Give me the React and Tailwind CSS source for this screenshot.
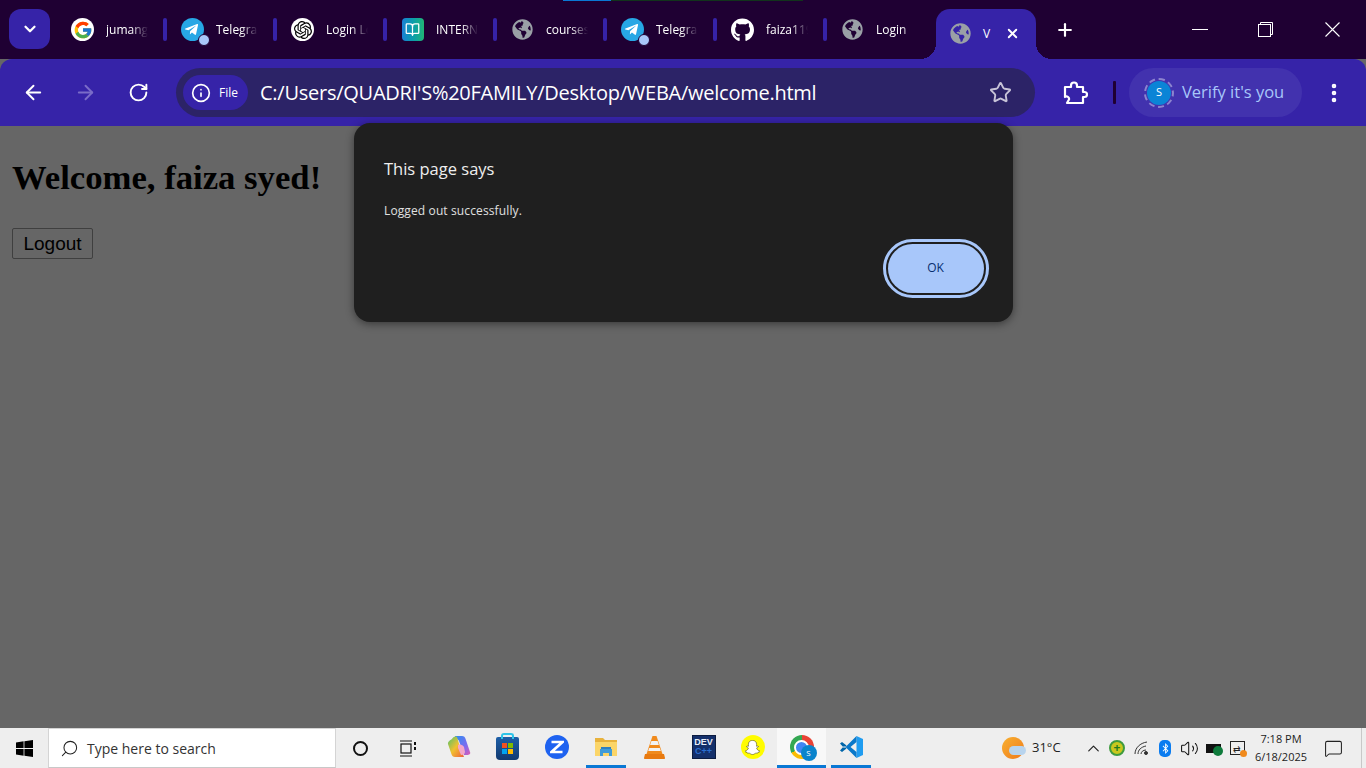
import React from 'react';
import { ArrowLeft, ArrowRight, RotateCw, Info, Star, EllipsisVertical, ChevronDown, Plus, X, ChevronUp, Search, Volume2, MessageSquare } from 'lucide-react';
import { FcGoogle } from 'react-icons/fc';
import { FaTelegramPlane, FaGithub, FaGlobeAmericas, FaSnapchatGhost, FaBluetoothB } from 'react-icons/fa';
import { SiOpenai } from 'react-icons/si';
import { LuBookOpen } from 'react-icons/lu';

const tabs = [
  { label: 'jumangi', icon: 'google' },
  { label: 'Telegram', icon: 'telegram' },
  { label: 'Login Lo', icon: 'openai' },
  { label: 'INTERNS', icon: 'book' },
  { label: 'courses/', icon: 'globe' },
  { label: 'Telegram', icon: 'telegram' },
  { label: 'faiza119', icon: 'github' },
  { label: 'Login', icon: 'globe' },
];

const TabIcon = ({ type }) => {
  switch (type) {
    case 'google':
      return (
        <span className="w-[23px] h-[23px] rounded-full bg-white flex items-center justify-center">
          <FcGoogle size={20} />
        </span>
      );
    case 'telegram':
      return (
        <span className="relative w-[23px] h-[23px] rounded-full bg-[#27a7e5] flex items-center justify-center">
          <FaTelegramPlane size={15} className="text-white -ml-[2px]" />
          <span className="absolute -right-[6px] -bottom-[5px] w-[10px] h-[10px] rounded-full bg-[#a8c7fa] border border-[#1f0033] box-content" />
        </span>
      );
    case 'openai':
      return (
        <span className="w-[23px] h-[23px] rounded-full bg-white flex items-center justify-center">
          <SiOpenai size={18} className="text-black" />
        </span>
      );
    case 'book':
      return (
        <span className="w-[22px] h-[23px] rounded-[4px] bg-linear-to-r from-[#1c7fd6] to-[#22b573] flex items-center justify-center">
          <LuBookOpen size={15} className="text-white" />
        </span>
      );
    case 'github':
      return <FaGithub size={24} className="text-white" />;
    default:
      return <FaGlobeAmericas size={21} className="text-[#9aa0a6]" />;
  }
};

const WindowsLogo = () => (
  <svg width="17" height="17" viewBox="0 0 17 17" fill="#000">
    <path d="M0 2.4 7.6 1.3V8H0zM8.4 1.2 17 0v8H8.4zM0 9h7.6v6.7L0 14.6zM8.4 9H17v8l-8.6-1.2z" />
  </svg>
);

const TaskView = () => (
  <svg width="17" height="17" viewBox="0 0 17 17" fill="none" stroke="#111" strokeWidth="1.2">
    <rect x="1" y="4" width="10" height="9" />
    <path d="M0 1h12M0 16h12" />
    <path d="M15 2v3M15 7v3" strokeWidth="2" />
  </svg>
);

const Copilot = () => (
  <svg width="26" height="24" viewBox="0 0 26 24">
    <defs>
      <linearGradient id="cpa" x1="0" y1="0" x2="1" y2="1">
        <stop offset="0" stopColor="#2b8ff0" />
        <stop offset="0.6" stopColor="#7a6cf0" />
        <stop offset="1" stopColor="#e05ab0" />
      </linearGradient>
      <linearGradient id="cpb" x1="0" y1="0" x2="1" y2="1">
        <stop offset="0" stopColor="#4fc26a" />
        <stop offset="0.5" stopColor="#f0c030" />
        <stop offset="1" stopColor="#f0603a" />
      </linearGradient>
    </defs>
    <path d="M9 1h7c2 0 3 1 3.6 3L24 17c1 2-1 3-3 3h-3L13 6c-.6-1.6-2-2-3.6-2z" fill="url(#cpa)" />
    <path d="M6 4c1-2 3-3 5-2l3 10 4 10H9c-2 0-3-1-3.600-3L2 9c-.4-2 2-4 4-5z" fill="url(#cpb)" />
    <path d="M12 10c2-1 5 0 6 2l1 5c0 2-2 3-4 3l-3-7z" fill="#f4a6c8" />
  </svg>
);

const StoreIcon = () => (
  <span className="relative w-[23px] h-[23px] mt-[2px] rounded-b-[4px] rounded-t-[2px] bg-linear-to-b from-[#1d5fa8] to-[#123a70] flex items-center justify-center">
    <span className="absolute -top-[4px] left-[5px] w-[13px] h-[6px] border-2 border-b-0 border-[#2ec4e8] rounded-t-[3px]" />
    <span className="grid grid-cols-2 gap-[1px] w-[11px] h-[11px]">
      <span className="bg-[#f25022]" />
      <span className="bg-[#7fba00]" />
      <span className="bg-[#00a4ef]" />
      <span className="bg-[#ffb900]" />
    </span>
  </span>
);

const ZIcon = () => (
  <span className="w-6 h-6 rounded-full bg-[#1e62f0] flex items-center justify-center">
    <svg width="14" height="14" viewBox="0 0 14 14" fill="none" stroke="#fff" strokeWidth="2.6">
      <path d="M1.500 2h11L1.500 12h11" />
    </svg>
  </span>
);

const FolderIcon = () => (
  <svg width="22" height="20" viewBox="0 0 22 20">
    <path d="M0 1h8l2 2h12v15H0z" fill="#e8b23c" />
    <path d="M0 5h22v14H0z" fill="#fbd568" />
    <path d="M5 12h12v7h-3v-3H8v3H5z" fill="#3f9bd9" />
    <path d="M6 10h10v2H6z" fill="#2f7fc0" />
  </svg>
);

const VlcIcon = () => (
  <svg width="21" height="23" viewBox="0 0 21 23">
    <path d="M8.500 0h4l6 18H2.500z" fill="#f08a1c" />
    <path d="M7.400 5h6.200l1.300 4H6.100zM5.200 12h10.600l1 3H4.200z" fill="#f2f2f2" />
    <path d="M1 18h19l1 4c0 .6-.4 1-1 1H1c-.6 0-1-.4-1-1z" fill="#e87a10" />
  </svg>
);

const DevCpp = () => (
  <span className="w-6 h-6 bg-[#14306b] border border-[#0c1c40] flex flex-col items-center justify-center leading-none font-['Liberation_Sans',sans-serif] font-bold">
    <span className="text-[9px] text-[#e8eef8]">DEV</span>
    <span className="text-[9px] text-[#2a6fd0]">C++</span>
  </span>
);

const SnapIcon = () => (
  <span className="w-6 h-6 rounded-full bg-[#fffc00] flex items-center justify-center">
    <FaSnapchatGhost size={15} className="text-white stroke-black stroke-[14px]" />
  </span>
);

const ChromeIcon = () => (
  <span className="relative w-6 h-6 rounded-full bg-[conic-gradient(#e94335_0deg_120deg,#fbbc05_120deg_240deg,#34a853_240deg_360deg)] flex items-center justify-center">
    <span className="w-[11px] h-[11px] rounded-full bg-[#4285f4] border-2 border-white box-content" />
    <span className="absolute -right-[3px] -bottom-[2px] w-[16px] h-[16px] rounded-full bg-[#0a84cc] text-white text-[8px] flex items-center justify-center font-['Open_Sans',sans-serif]">S</span>
  </span>
);

const VsCode = () => (
  <svg width="24" height="24" viewBox="0 0 24 24">
    <path d="M17.500 1 24 4v16l-6.500 3z" fill="#1f9cf0" />
    <path d="M17.500 1 6.500 12l11 11 0-6-6-5 6-5z" fill="#0a78c9" />
    <path d="M1 8.500 3 7l4.500 3.500L5 13zM1 15.500 3 17l4.500-3.500L5 11z" fill="#0065a9" />
  </svg>
);

const taskbarApps = [
  { key: 'copilot', node: <Copilot /> },
  { key: 'store', node: <StoreIcon /> },
  { key: 'zoom', node: <ZIcon /> },
  { key: 'explorer', node: <FolderIcon />, running: true },
  { key: 'vlc', node: <VlcIcon /> },
  { key: 'dev', node: <DevCpp /> },
  { key: 'snap', node: <SnapIcon /> },
  { key: 'chrome', node: <ChromeIcon />, active: true },
  { key: 'vscode', node: <VsCode />, running: true },
];

const trayIcons = [
  <ChevronUp key="caret" size={19} strokeWidth={1.5} className="text-[#222]" />,
  <span key="green" className="w-4 h-4 rounded-full bg-[#c9c81e] border-2 border-[#3f9b3f] flex items-center justify-center text-[#1f7a1f] text-[12px] font-bold leading-none">+</span>,
  <svg key="wifi" width="15" height="14" viewBox="0 0 15 14" fill="none" stroke="#333" strokeWidth="1">
    <path d="M1 13C1 7 6 2 13 1M4 13c0-4 3-7 8-8M7 13c0-2 2-4 5-4" />
    <circle cx="12" cy="12" r="1.500" fill="#333" />
  </svg>,
  <span key="bt" className="w-[12px] h-[17px] rounded-[5px] bg-[#0a7cf0] flex items-center justify-center">
    <FaBluetoothB size={11} className="text-white" />
  </span>,
  <Volume2 key="vol" size={19} strokeWidth={1.3} className="text-[#111]" />,
  <span key="bat" className="relative w-[15px] h-[9px] bg-[#111] border border-[#111] flex">
    <span className="absolute -right-[3px] -bottom-[4px] w-[10px] h-[10px] rounded-full bg-[#0f7b3c]" />
  </span>,
  <span key="sync" className="relative w-[15px] h-[14px] border border-[#222] flex items-center justify-center text-[9px] leading-none text-[#222]">
    ⇄
    <span className="absolute -right-[3px] -bottom-[3px] w-[7px] h-[7px] rounded-full bg-[#f08a1c]" />
  </span>,
];

const App = () => {
  return (
    <div className="relative w-[1366px] h-[768px] overflow-hidden flex flex-col bg-[#666666] font-['Open_Sans',sans-serif]">
      {/* tab strip */}
      <div className="relative h-[59px] shrink-0 bg-[#1f0033] flex items-start pl-[9px] text-white">
        <div className="absolute top-0 left-[563px] w-[48px] h-px bg-[#0a78d4]" />
        <div className="absolute top-0 left-[611px] w-[192px] h-px bg-[#12331c]" />

        <div className="mt-[9px] w-[41px] h-[40px] rounded-[12px] bg-[#3623a8] flex items-center justify-center">
          <ChevronDown size={18} strokeWidth={3} />
        </div>

        <div className="flex ml-[5px] h-full">
          {tabs.map((t, i) => (
            <div key={i} className="w-[110px] h-[23px] mt-[18px] pl-[16px] flex items-center">
              <span className="w-[23px] shrink-0 flex justify-center"><TabIcon type={t.icon} /></span>
              <span className="ml-[12px] w-[42px] text-[12px] whitespace-nowrap overflow-hidden [mask-image:linear-gradient(to_right,black_60%,transparent)]">{t.label}</span>
              {i < tabs.length - 1 && <span className="ml-auto -mr-[2px] w-[4px] h-[23px] rounded-[2px] bg-[#3623a8]" />}
            </div>
          ))}
        </div>

        <div className="relative mt-[9px] ml-[1px] w-[100px] h-[50px] rounded-t-[14px] bg-[#3623a8] flex items-center pl-[14px] pb-[1px]">
          <span className="absolute -left-[16px] bottom-0 w-4 h-4 bg-[radial-gradient(circle_at_0_0,transparent_16px,#3623a8_16px)]" />
          <span className="absolute -right-[16px] bottom-0 w-4 h-4 bg-[radial-gradient(circle_at_100%_0,transparent_16px,#3623a8_16px)]" />
          <FaGlobeAmericas size={21} className="text-[#9aa0a6] shrink-0" />
          <span className="ml-[12px] text-[12px]">V</span>
          <X size={15} strokeWidth={3} className="ml-auto mr-[16px]" />
        </div>

        <Plus size={20} strokeWidth={2.6} className="mt-[20px] ml-[19px]" />

        <div className="ml-auto flex h-[59px] items-center pb-[1px]">
          <span className="w-[16px] h-px bg-white mr-[50px]" />
          <svg width="15" height="15" viewBox="0 0 15 15" fill="none" stroke="#fff" strokeWidth="1" className="mr-[52px]">
            <rect x="0.500" y="2.500" width="12" height="12" />
            <path d="M2.500 2.500V.5h12v12h-2" />
          </svg>
          <svg width="15" height="15" viewBox="0 0 15 15" fill="none" stroke="#fff" strokeWidth="1.1" className="mr-[26px]">
            <path d="M0.500 0.500l14 14M14.500 0.500l-14 14" />
          </svg>
        </div>
      </div>

      {/* toolbar */}
      <div className="h-[67px] shrink-0 bg-[#3623a8] rounded-t-[12px] flex items-center text-white">
        <ArrowLeft size={23} strokeWidth={2} className="ml-[22px]" />
        <ArrowRight size={23} strokeWidth={2} className="ml-[29px] text-[#7a6cc8]" />
        <RotateCw size={21} strokeWidth={2.2} className="ml-[31px]" />

        <div className="ml-[27px] w-[859px] h-[49px] rounded-full bg-[#2c2367] flex items-center pl-[7px] pr-[23px]">
          <div className="w-[65px] h-[35px] rounded-full bg-[#3623a8] flex items-center pl-[8px] gap-[8px]">
            <Info size={20} strokeWidth={2} />
            <span className="text-[12px]">File</span>
          </div>
          <span className="ml-[12px] text-[20px] whitespace-nowrap tracking-[-0.25px]">C:/Users/QUADRI'S%20FAMILY/Desktop/WEBA/welcome.html</span>
          <Star size={23} strokeWidth={2} className="ml-auto text-[#c8c4d8]" />
        </div>

        <svg width="26" height="26" viewBox="0 0 26 26" fill="none" stroke="#fff" strokeWidth="2.200" strokeLinejoin="round" className="ml-[27px]">
          <path d="M3 7h6V5.500a3 3 0 0 1 6 0V7h6v5h1.500a2.500 2.500 0 0 1 0 5H21v6H5l2-3.500a2.500 2.500 0 0 0-4-2.500z" />
        </svg>
        <span className="ml-[25px] w-[3px] h-[23px] rounded-[1px] bg-[#1f0033]" />

        <div className="ml-[13px] w-[173px] h-[49px] rounded-full bg-[#4232ae] flex items-center pl-[15px]">
          <span className="w-[30px] h-[30px] rounded-full border-2 border-dashed border-[#8d84cf] flex items-center justify-center">
            <span className="w-[24px] h-[24px] rounded-full bg-[#0a84d6] flex items-center justify-center text-[11px] text-white">S</span>
          </span>
          <span className="ml-[8px] text-[16.5px] text-[#a8c7fa] whitespace-nowrap">Verify it's you</span>
        </div>

        <EllipsisVertical size={24} strokeWidth={2.6} className="ml-[20px]" />
      </div>

      {/* page */}
      <div className="flex-1 bg-[#666666] px-[12px] pt-[30px] text-black">
        <h1 className="font-['Liberation_Serif',serif] font-bold text-[34.7px] leading-[44px]">Welcome, faiza syed!</h1>
        <button className="mt-[28px] w-[81px] h-[31px] border border-[#3f3f3f] rounded-[2px] bg-[#666666] font-['Liberation_Sans',sans-serif] text-[19px] leading-none flex items-center justify-center">Logout</button>
      </div>

      {/* alert dialog */}
      <div className="absolute left-[354px] top-[123px] w-[659px] h-[199px] rounded-[16px] bg-[#1f1f1f] shadow-[0_2px_8px_rgba(0,0,0,0.45)] pl-[30px] pr-[24px] pt-[35px] flex flex-col text-white">
        <div className="text-[16.5px] font-medium leading-[22px] text-[#eeeeee]">This page says</div>
        <div className="mt-[23px] text-[12px] tracking-[0.12px] leading-[16px] text-[#e0e0e0]">Logged out successfully.</div>
        <div className="mt-auto mb-[24px] flex justify-end">
          <button className="w-[106px] h-[59px] rounded-full border-[3px] border-[#a8c7fa] p-[2px]">
            <span className="w-full h-full rounded-full bg-[#a8c7fa] flex items-center justify-center text-[12px] text-[#062e6f] pr-[1px] pb-[1px]">OK</span>
          </button>
        </div>
      </div>

      {/* taskbar */}
      <div className="h-[40px] shrink-0 bg-[#eeeeee] flex items-stretch font-['Open_Sans',sans-serif] text-[#222]">
        <div className="w-[48px] flex items-center justify-center"><WindowsLogo /></div>
        <div className="w-[288px] bg-white border border-[#d4d4d4] border-b-[#c8c8c8] flex items-center pl-[11px]">
          <Search size={19} strokeWidth={1.3} className="-scale-x-100 text-[#222]" />
          <span className="ml-[8px] text-[14px] text-[#333]">Type here to search</span>
        </div>
        <div className="w-[48px] flex items-center justify-center">
          <span className="w-[15px] h-[15px] rounded-full border-[2.5px] border-[#111]" />
        </div>
        <div className="w-[48px] flex items-center justify-center"><TaskView /></div>
        <div className="flex ml-[2px]">
          {taskbarApps.map((a) => (
            <div key={a.key} className={a.active ? 'w-[49px] flex flex-col items-center bg-[#f8f8f8]' : 'w-[49px] flex flex-col items-center'}>
              <div className="flex-1 flex items-center justify-center pt-[1px]">{a.node}</div>
              {a.active && <span className="h-[3px] w-full bg-[#0a78d4]" />}
              {a.running && <span className="h-[3px] w-[40px] bg-[#0a78d4]" />}
              {!a.active && !a.running && <span className="h-[3px]" />}
            </div>
          ))}
        </div>

        <div className="ml-auto w-[79px] flex items-center">
          <span className="relative w-[22px] h-[22px] rounded-full bg-linear-to-br from-[#f8b030] to-[#ee7a1c]">
            <span className="absolute left-[7px] top-[9px] w-[17px] h-[9px] rounded-full bg-[#b8d4ee]" />
          </span>
          <span className="ml-[8px] text-[13px]">31°C</span>
        </div>
        <div className="flex items-center">
          {trayIcons.map((ic, i) => (
            <span key={i} className="w-[24px] flex items-center justify-center">{ic}</span>
          ))}
        </div>
        <div className="w-[64px] flex flex-col items-center justify-center text-[11px] leading-[18px]">
          <span>7:18 PM</span>
          <span>6/18/2025</span>
        </div>
        <div className="w-[40px] flex items-center justify-center">
          <MessageSquare size={19} strokeWidth={1.3} />
        </div>
        <div className="w-[13px] pl-[8px]"><div className="h-full border-l border-[#c8c8c8]" /></div>
      </div>
    </div>
  );
};

export default App;
